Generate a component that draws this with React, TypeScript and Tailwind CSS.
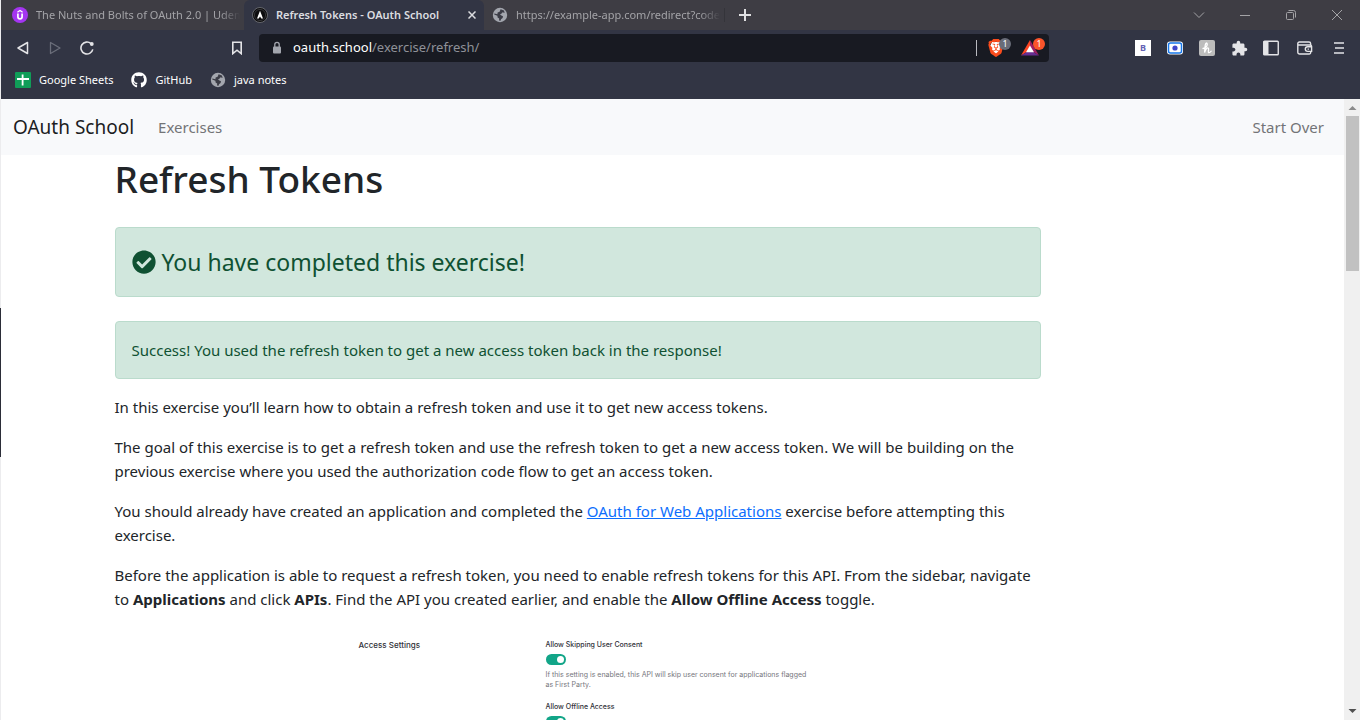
import type { ReactNode } from "react";
import { FaCheckCircle, FaGithub } from "react-icons/fa";
import { MdExtension } from "react-icons/md";
import { SiBrave } from "react-icons/si";

function Globe() {
  return (
    <svg viewBox="0 0 16 16" className="size-4 shrink-0" aria-hidden="true">
      <circle cx="8" cy="8" r="7.2" fill="#a3a6ae" />
      <path
        d="M8.6 2.2 12 3.6 12.6 6 10.6 5.2 9.6 6.6 8 7.4 9.4 8.6 11 9.2 10.6 11 9 12.2 8.6 13.8 7 13.6 7.2 11.4 5.6 10.4 5.4 8.8 2.2 7.6 2.4 6.6 5.4 7.2 5.6 5.6 7.6 4.8Z"
        fill="#3b3c46"
      />
    </svg>
  );
}

function UdemyIcon() {
  return (
    <svg viewBox="0 0 16 16" className="size-4 shrink-0" aria-hidden="true">
      <circle cx="8" cy="8" r="8" fill="#a435f0" />
      <path d="M5.4 5.2 8 3.5l2.6 1.7" fill="none" stroke="#fff" strokeWidth="1.3" />
      <path d="M5.9 6.6v3.2a2.1 2.1 0 0 0 4.2 0V6.6" fill="none" stroke="#fff" strokeWidth="1.7" />
    </svg>
  );
}

function SchoolIcon() {
  return (
    <svg viewBox="0 0 16 16" className="size-4 shrink-0" aria-hidden="true">
      <circle cx="8" cy="8" r="7.5" fill="#0c0c0e" stroke="#77787e" strokeWidth="0.8" />
      <circle cx="8" cy="8" r="5.6" fill="none" stroke="#3c3c40" strokeWidth="0.8" />
      <path d="M8 3.8 11 11.4H9.3L8 9.4 6.7 11.4H5Z" fill="#fff" />
    </svg>
  );
}

function SheetsIcon() {
  return (
    <svg viewBox="0 0 16 16" className="size-4 shrink-0" aria-hidden="true">
      <rect width="16" height="16" rx="1" fill="#109d58" />
      <path d="M2 7h12M7.6 2.6v11" stroke="#fff" strokeWidth="1.8" />
    </svg>
  );
}

type TabProps = { icon: ReactNode; title: string; active?: boolean };

function Tab({ icon, title, active }: TabProps) {
  return (
    <div
      className={
        active
          ? "flex w-60 items-center gap-2 rounded-t-md bg-[#323544] pr-1.5 pl-2 text-[#dcdde0]"
          : "flex w-60 items-center gap-2 pr-1 pl-2 text-[#a3a3a7]"
      }
    >
      {icon}
      <span
        className={
          active
            ? "flex-1 overflow-hidden text-[11px] font-semibold whitespace-nowrap"
            : "flex-1 overflow-hidden mask-r-from-90% text-[11px] whitespace-nowrap"
        }
      >
        {title}
      </span>
      {active && (
        <button aria-label="Close tab" className="flex size-3 shrink-0 items-center justify-center">
          <svg viewBox="0 0 8 8" className="size-2" stroke="currentColor" strokeWidth="1.5">
            <path d="M.5.5l7 7M7.5.5l-7 7" />
          </svg>
        </button>
      )}
    </div>
  );
}

function WindowButton({ label, children }: { label: string; children: ReactNode }) {
  return (
    <button aria-label={label} className="flex w-[46px] items-center justify-center text-[#a3a3a6]">
      <svg viewBox="0 0 12 12" className="size-3" fill="none" stroke="currentColor">
        {children}
      </svg>
    </button>
  );
}

function TabStrip() {
  return (
    <div className="flex h-[30px] bg-[#3e3d44] pl-[3px]">
      <Tab icon={<UdemyIcon />} title="The Nuts and Bolts of OAuth 2.0 | Udemy" />
      <Tab icon={<SchoolIcon />} title="Refresh Tokens - OAuth School" active />
      <Tab icon={<Globe />} title="https://example-app.com/redirect?code=" />
      <div className="my-2 w-px bg-[#34343a]" />
      <button aria-label="New tab" className="flex w-10 items-center justify-center text-[#e0e0e2]">
        <svg viewBox="0 0 12 12" className="size-3" stroke="currentColor" strokeWidth="2">
          <path d="M6 0v12M0 6h12" />
        </svg>
      </button>
      <div className="ml-auto flex">
        <WindowButton label="Search tabs">
          <path d="M1 3.5l5 5 5-5" />
        </WindowButton>
        <WindowButton label="Minimize">
          <path d="M1 6.5h10" />
        </WindowButton>
        <WindowButton label="Restore">
          <rect x="1.5" y="3.5" width="7" height="7" rx="1" />
          <path d="M3.5 1.5h5a2 2 0 0 1 2 2v5" />
        </WindowButton>
        <WindowButton label="Close">
          <path d="M1 1l10 10M11 1L1 11" />
        </WindowButton>
      </div>
    </div>
  );
}

function ToolButton({ label, children }: { label: string; children: ReactNode }) {
  return (
    <button aria-label={label} className="flex size-8 shrink-0 items-center justify-center text-[#e4e4e7]">
      {children}
    </button>
  );
}

function AddressBar() {
  return (
    <div className="flex h-7 flex-1 items-center rounded bg-[#181a22] pl-3">
      <svg viewBox="0 0 12 14" className="h-3.5 w-3" aria-hidden="true">
        <rect x="2" y="5.5" width="8" height="7" rx="1" fill="#a3a6ae" />
        <path d="M3.8 6V3.6a2.2 2.2 0 0 1 4.4 0V6" fill="none" stroke="#a3a6ae" strokeWidth="1.3" />
      </svg>
      <div className="ml-2.5 flex-1 text-[13px] text-[#8f9198]">
        <span className="text-white">oauth.school</span>/exercise/refresh/
      </div>
      <div className="h-4 w-px bg-[#b9bac0]" />
      <button aria-label="Brave Shields" className="relative ml-2.5 flex size-6 items-center">
        <svg viewBox="0 0 18 18" className="absolute left-0 size-[18px]">
          <path d="M5 3h8l2 4-2 6-4 3-4-3-2-6Z" fill="#fff" />
        </svg>
        <SiBrave className="relative size-[18px] text-[#fb4c1c]" />
        <span className="absolute top-0.5 left-3 flex size-3 items-center justify-center rounded-full bg-[#696c78] text-[9px] text-white">
          1
        </span>
      </button>
      <button aria-label="Brave Rewards" className="relative mr-1 ml-2.5 flex size-6 items-center">
        <svg viewBox="0 0 18 16" className="h-4 w-[18px]">
          <path d="M9 0 0 15.5 9 10Z" fill="#ff4724" />
          <path d="M9 0v10l9 5.5Z" fill="#9e1f63" />
          <path d="M0 15.5h18L9 10Z" fill="#662d91" />
          <path d="M9 5.5 5 12.3h8Z" fill="#fff" />
        </svg>
        <span className="absolute top-0.5 left-3 flex size-3 items-center justify-center rounded-full bg-[#fb542b] text-[9px] text-white">
          1
        </span>
      </button>
    </div>
  );
}

function Toolbar() {
  return (
    <div className="flex h-9 items-center pl-1.5">
      <ToolButton label="Back">
        <svg viewBox="0 0 14 14" className="size-3.5" fill="none" stroke="currentColor" strokeWidth="1.5" strokeLinejoin="round">
          <path d="M11.5 1.5v11L2 7Z" />
        </svg>
      </ToolButton>
      <ToolButton label="Forward">
        <svg viewBox="0 0 14 14" className="size-3.5" fill="none" stroke="#6b6e7a" strokeWidth="1.3" strokeLinejoin="round">
          <path d="M2.5 1.5v11L12 7Z" />
        </svg>
      </ToolButton>
      <ToolButton label="Reload">
        <svg viewBox="0 0 14 14" className="size-3.5" fill="none" stroke="currentColor" strokeWidth="1.6">
          <path d="M11 2.6A6 6 0 1 0 12.8 8.4" />
          <circle cx="11.8" cy="3" r="1.9" fill="currentColor" stroke="none" />
        </svg>
      </ToolButton>
      <div className="ml-[118px] flex">
        <ToolButton label="Bookmark this page">
          <svg viewBox="0 0 12 14" className="h-3.5 w-3" fill="none" stroke="currentColor" strokeWidth="1.6">
            <path d="M1.8 1.2h8.4v11.4L6 9.2l-4.2 3.4Z" />
          </svg>
        </ToolButton>
      </div>
      <div className="ml-1.5 flex flex-1">
        <AddressBar />
      </div>
      <div className="ml-[78px] flex pr-[5px]">
        <ToolButton label="Bookmark manager">
          <span className="flex size-4 items-center justify-center bg-white text-[9px] font-bold text-[#6563b5]">B</span>
        </ToolButton>
        <ToolButton label="Screen capture">
          <svg viewBox="0 0 16 14" className="h-3.5 w-4">
            <rect x="0" y="0.5" width="16" height="13" rx="3" fill="#fff" />
            <rect x="1.5" y="2" width="13" height="10" rx="2" fill="#fff" stroke="#1677ea" strokeWidth="1.5" />
            <circle cx="8" cy="7" r="2.6" fill="#3f45c8" />
          </svg>
        </ToolButton>
        <ToolButton label="Honey">
          <svg viewBox="0 0 16 16" className="size-4">
            <rect width="16" height="16" rx="2" fill="#bcbcbc" />
            <path
              d="M4 8.5C7.5 8 8.8 5 8 3.4 7.2 2.2 6.2 4 6 7L5.6 12.6C6.6 9 8 7.4 9.2 8c1.2.8-.6 4 .4 4.6.8.4 1.8-.4 2.6-1.4"
              fill="none"
              stroke="#fff"
              strokeWidth="1.3"
              strokeLinecap="round"
            />
          </svg>
        </ToolButton>
        <ToolButton label="Extensions">
          <MdExtension className="size-[17px]" />
        </ToolButton>
        <ToolButton label="Side panel">
          <svg viewBox="0 0 16 16" className="size-4">
            <rect x="0.75" y="1.25" width="14.5" height="13.5" rx="0.8" fill="none" stroke="currentColor" strokeWidth="1.4" />
            <path d="M.5 1h5v14h-5Z" fill="currentColor" />
          </svg>
        </ToolButton>
        <div className="ml-0.5 flex gap-0.5">
          <ToolButton label="Wallet">
            <svg viewBox="0 0 16 14" className="h-3.5 w-4" fill="none" stroke="currentColor" strokeWidth="1.4">
              <path d="M13.6 4.2V2.6a1.6 1.6 0 0 0-1.6-1.6H2.4A1.6 1.6 0 0 0 .8 2.6v8.6a1.8 1.8 0 0 0 1.8 1.8h9.6a1.5 1.5 0 0 0 1.5-1.5v-1" />
              <path d="M1 4h12.2a1.4 1.4 0 0 1 1.4 1.4v5h-4a2.3 2.3 0 0 1 0-4.6h4" />
              <path d="M10.6 8.1h1.4" />
            </svg>
          </ToolButton>
          <ToolButton label="Menu">
            <svg viewBox="0 0 12 12" className="size-3" stroke="currentColor" strokeWidth="1.6">
              <path d="M1 1h10M2 6h9M1 11h10" />
            </svg>
          </ToolButton>
        </div>
      </div>
    </div>
  );
}

function BookmarksBar() {
  return (
    <div className="flex h-[33px] items-start gap-[18px] pt-1.5 pl-3.5 text-[11px] leading-4 text-white">
      <a href="#sheets" className="flex items-center gap-2">
        <SheetsIcon />
        Google Sheets
      </a>
      <a href="#github" className="flex items-center gap-2">
        <FaGithub className="size-4" />
        GitHub
      </a>
      <a href="#notes" className="flex items-center gap-2">
        <Globe />
        java notes
      </a>
    </div>
  );
}

function Alert({ children }: { children: ReactNode }) {
  return <div className="rounded border border-[#badbcc] bg-[#d1e7dd] p-4 text-[#0f5132]">{children}</div>;
}

function Setting({ id, label, note }: { id: string; label: string; note: string }) {
  return (
    <div className="mb-3">
      <label htmlFor={id} className="block text-[7px] leading-[10px] font-medium text-[#303138]">
        {label}
      </label>
      <span className="relative mt-1 mb-1 block h-3 w-5">
        <input
          id={id}
          type="checkbox"
          defaultChecked
          className="peer block h-[11px] w-5 appearance-none rounded-full bg-[#b5b6ba] checked:bg-[#12a588]"
        />
        <span className="pointer-events-none absolute top-[2px] left-0.5 size-[7px] rounded-full bg-white peer-checked:left-[11px]" />
      </span>
      <p className="text-[7px] leading-[10px] text-[#75767c]">{note}</p>
    </div>
  );
}

function AccessSettings() {
  return (
    <section className="ml-[244px] flex w-[454px] pt-[13px] font-[Inter,sans-serif]">
      <h2 className="w-[187px] shrink-0 text-[8px] leading-[10px] font-medium text-[#303138]">Access Settings</h2>
      <div className="flex-1">
        <Setting
          id="skip-consent"
          label="Allow Skipping User Consent"
          note="If this setting is enabled, this API will skip user consent for applications flagged as First Party."
        />
        <Setting
          id="offline-access"
          label="Allow Offline Access"
          note="If this setting is enabled, this API will allow applications to ask for Refresh Tokens."
        />
      </div>
    </section>
  );
}

function Page() {
  return (
    <div className="min-w-0 flex-1 overflow-hidden bg-white text-[#212529]">
      <nav className="flex h-14 items-center bg-[#f8f9fb] pr-5 pl-3 text-[15px] text-[#737477]">
        <a href="#home" className="text-[19px] text-[#1c1d1f]">
          OAuth School
        </a>
        <a href="#exercises" className="ml-6">
          Exercises
        </a>
        <a href="#start-over" className="ml-auto">
          Start Over
        </a>
      </nav>
      <div className="mx-auto max-w-[1140px]">
        <main className="w-5/6 px-3 text-[15px] leading-6">
          <h1 className="mb-6 text-[37px] leading-[48px] font-medium">Refresh Tokens</h1>
          <div className="mb-4 flex flex-col gap-6">
            <Alert>
              <h2 className="flex h-9 items-center gap-1.5 text-[23px]">
                <FaCheckCircle className="size-6" />
                You have completed this exercise!
              </h2>
            </Alert>
            <Alert>Success! You used the refresh token to get a new access token back in the response!</Alert>
          </div>
          <div className="flex flex-col gap-4">
            <p>In this exercise you’ll learn how to obtain a refresh token and use it to get new access tokens.</p>
            <p>
              The goal of this exercise is to get a refresh token and use the refresh token to get a new access token. We
              will be building on the previous exercise where you used the authorization code flow to get an access
              token.
            </p>
            <p>
              You should already have created an application and completed the{" "}
              <a href="#web" className="text-[#0d6efd] underline">
                OAuth for Web Applications
              </a>{" "}
              exercise before attempting this exercise.
            </p>
            <p>
              Before the application is able to request a refresh token, you need to enable refresh tokens for this API.
              From the sidebar, navigate to <strong>Applications</strong> and click <strong>APIs</strong>. Find the API
              you created earlier, and enable the <strong>Allow Offline Access</strong> toggle.
            </p>
            <AccessSettings />
          </div>
        </main>
      </div>
    </div>
  );
}

function Scrollbar() {
  return (
    <div className="flex w-4 shrink-0 flex-col items-center bg-[#f0f0f0]" aria-hidden="true">
      <svg viewBox="0 0 16 17" className="h-[17px] w-4 shrink-0">
        <path d="M4.5 11h8l-4-4Z" fill="#8b8b8b" />
      </svg>
      <div className="ml-px h-1/4 w-[13px] bg-[#c1c1c1]" />
      <svg viewBox="0 0 16 17" className="mt-auto h-[17px] w-4 shrink-0">
        <path d="M4.5 6h8l-4 4Z" fill="#505050" />
      </svg>
    </div>
  );
}

export default function App() {
  return (
    <div className="flex h-screen overflow-hidden font-['Noto_Sans','Open_Sans',sans-serif]">
      <div className="flex w-px shrink-0 flex-col bg-[#ececee]">
        <div className="h-[308px]" />
        <div className="h-[149px] bg-[#2b2d38]" />
      </div>
      <div className="flex min-w-0 flex-1 flex-col">
        <header className="bg-[#323544]">
          <TabStrip />
          <Toolbar />
          <BookmarksBar />
        </header>
        <div className="flex min-h-0 flex-1">
          <Page />
          <Scrollbar />
        </div>
      </div>
    </div>
  );
}
